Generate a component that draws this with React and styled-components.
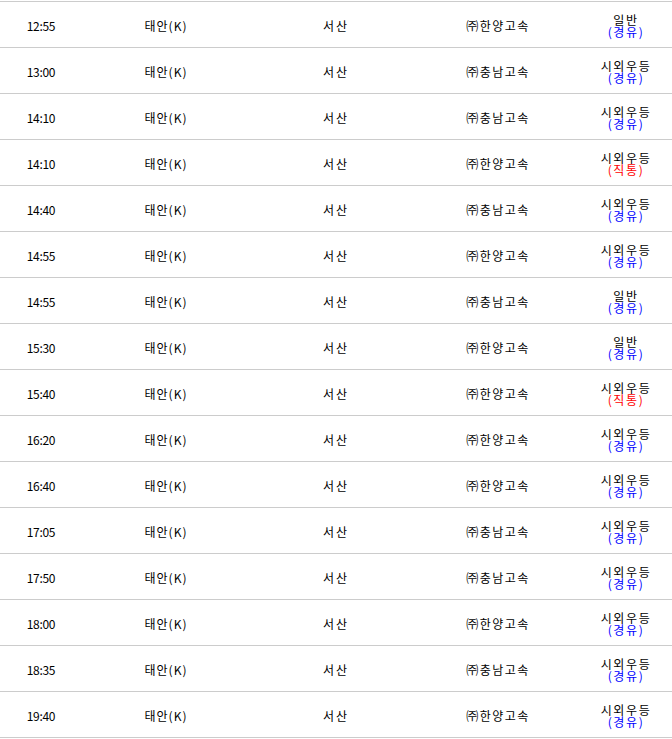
import styled, { createGlobalStyle } from 'styled-components';

const GlobalStyle = createGlobalStyle`
body {
    margin: 0;
    background: #FFFFFF;
    overflow: hidden;
}
`

const rows = [
    ['12:55', '㈜한양고속', '일반', '경유'],
    ['13:00', '㈜충남고속', '시외우등', '경유'],
    ['14:10', '㈜충남고속', '시외우등', '경유'],
    ['14:10', '㈜한양고속', '시외우등', '직통'],
    ['14:40', '㈜충남고속', '시외우등', '경유'],
    ['14:55', '㈜한양고속', '시외우등', '경유'],
    ['14:55', '㈜충남고속', '일반', '경유'],
    ['15:30', '㈜한양고속', '일반', '경유'],
    ['15:40', '㈜한양고속', '시외우등', '직통'],
    ['16:20', '㈜한양고속', '시외우등', '경유'],
    ['16:40', '㈜한양고속', '시외우등', '경유'],
    ['17:05', '㈜충남고속', '시외우등', '경유'],
    ['17:50', '㈜충남고속', '시외우등', '경유'],
    ['18:00', '㈜한양고속', '시외우등', '경유'],
    ['18:35', '㈜충남고속', '시외우등', '경유'],
    ['19:40', '㈜한양고속', '시외우등', '경유'],
]

export default function App() {
    return (
        <>
            <GlobalStyle />
            <Table>
                {rows.map((r, i) => (
                    <Row key={i}>
                        <Cell spacing="-0.3px">{r[0]}</Cell>
                        <Cell spacing="1px">태안(K)</Cell>
                        <Cell spacing="2px">서산</Cell>
                        <Cell spacing="1.5px">{r[1]}</Cell>
                        <Grade>
                            <Line>{r[2]}</Line>
                            <Line color={r[3] === '직통' ? '#FF0000' : '#0000FF'}>({r[3]})</Line>
                        </Grade>
                    </Row>
                ))}
            </Table>
        </>
    )
}

const Table = styled.div`
width: 678px;
padding-top: 1px;
font-family: 'Noto Sans CJK KR', 'Liberation Sans', sans-serif;
font-size: 12px;
color: #000000;
`

const Row = styled.div`
display: grid;
grid-template-columns: 82px 168px 172px 152px 104px;
height: 45px;
border-top: 1px solid #CCCCCC;

&:last-child {
    border-bottom: 1px solid #CCCCCC;
}
`

const Cell = styled.div`
display: flex;
align-items: center;
justify-content: center;
padding-top: 2px;
letter-spacing: ${props => props.spacing};
`

const Grade = styled.div`
display: flex;
flex-direction: column;
align-items: center;
justify-content: center;
padding-top: 2px;
letter-spacing: 1.6px;
`

const Line = styled.div`
height: 12px;
line-height: 12px;
overflow: visible;
color: ${props => props.color || '#000000'};
`
